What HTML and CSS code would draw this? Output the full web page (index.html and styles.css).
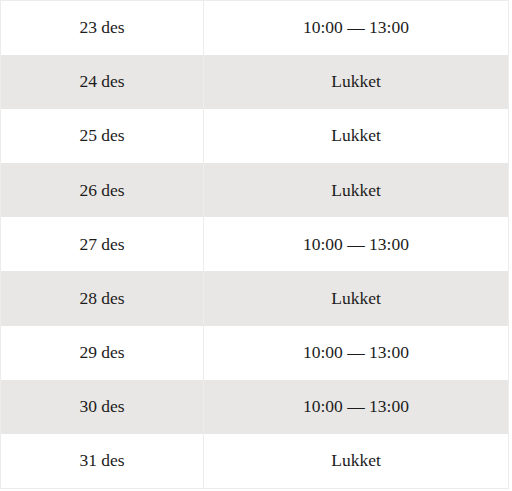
FILE: index.html
```html
<!DOCTYPE html>
<html lang="da">
<head>
<meta charset="utf-8">
<link rel="stylesheet" href="styles.css">
</head>
<body>
<table class="hours">
  <tbody>
    <tr><td class="day">23 des</td><td class="time">10:00 — 13:00</td></tr>
    <tr class="alt"><td class="day">24 des</td><td class="time">Lukket</td></tr>
    <tr><td class="day">25 des</td><td class="time">Lukket</td></tr>
    <tr class="alt"><td class="day">26 des</td><td class="time">Lukket</td></tr>
    <tr><td class="day">27 des</td><td class="time">10:00 — 13:00</td></tr>
    <tr class="alt"><td class="day">28 des</td><td class="time">Lukket</td></tr>
    <tr><td class="day">29 des</td><td class="time">10:00 — 13:00</td></tr>
    <tr class="alt"><td class="day">30 des</td><td class="time">10:00 — 13:00</td></tr>
    <tr><td class="day">31 des</td><td class="time">Lukket</td></tr>
  </tbody>
</table>
</body>
</html>
```
FILE: styles.css
```css
html, body {
  margin: 0;
  padding: 0;
  background: #ffffff;
}
.hours {
  width: 509px;
  border-collapse: collapse;
  border: 1px solid #ececec;
  font-family: "Liberation Serif", "Times New Roman", serif;
  font-size: 17.5px;
  color: #1c1c1c;
}
.hours td {
  height: 54.2px;
  padding: 0;
  text-align: center;
  vertical-align: middle;
  box-sizing: border-box;
}
.hours .day {
  width: 203px;
  border-right: 1px solid #ececec;
}
.hours .alt td {
  background: #e9e7e5;
}
```
